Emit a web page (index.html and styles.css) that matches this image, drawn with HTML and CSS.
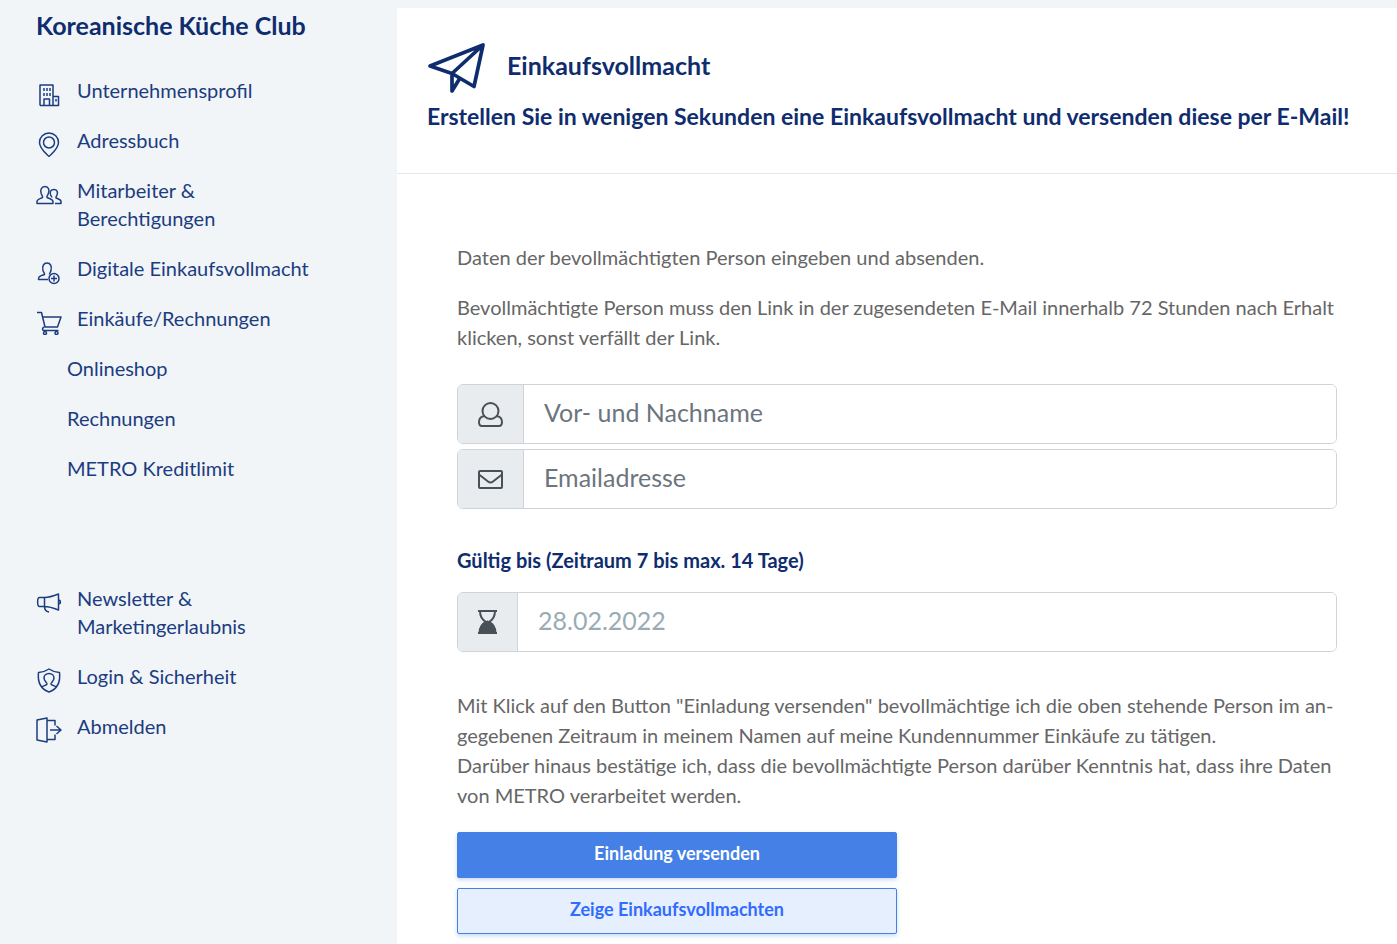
FILE: index.html
```html
<!DOCTYPE html>
<html lang="de">
<head>
    <meta charset="UTF-8">
    <meta name="viewport" content="width=device-width, initial-scale=1.0">
    <title>Einkaufsvollmacht</title>
    <link rel="stylesheet" href="styles.css">
</head>
<body>
    <aside class="sidebar">
        <h2 class="club-name">Koreanische Küche Club</h2>

        <nav class="nav">
            <a href="#" class="nav-link">
                <svg class="nav-icon" viewBox="0 0 26 26"><path d="M4 24.500V4h13v20.500M4 24.500h18.500v-9h-5.500M8 24.500v-6.500h5.500v6.500"/><path d="M8 7v3M11 7v3M14 7v3M8 12v3M11 12v3M14 12v3M20 18v2.500"/></svg>
                <span>Unternehmensprofil</span>
            </a>
            <a href="#" class="nav-link">
                <svg class="nav-icon" viewBox="0 0 26 26"><path d="M13 25.500C10 22.500 3.500 17.500 3.500 11.500a9.500 9.500 0 0 1 19 0c0 6-6.500 11-9.500 14z"/><circle cx="13" cy="11.500" r="5.500"/></svg>
                <span>Adressbuch</span>
            </a>
            <a href="#" class="nav-link">
                <svg class="nav-icon" viewBox="0 0 26 26"><path d="M1 22.500v-2c0-2 2-2.500 5.500-4 .5-1-.5-2-1.200-3.500C3.700 9 5.500 5.500 9 5.500s5 3.500 3.200 7.500c-.7 1.500-1.700 2.500-1.200 3.500 4 1.500 6 2 6 4v2z"/><path d="M14.500 13.500c-1-3 .5-5 3.500-5s4.200 2.500 3 5.500c-.6 1.500-1.300 2-1 3 3 1.300 5 1.500 5 3.500v2h-6M14.500 13.500c.2 1.500 1.500 2 1.200 3"/></svg>
                <span>Mitarbeiter &amp;<br>Berechtigungen</span>
            </a>
            <a href="#" class="nav-link">
                <svg class="nav-icon" viewBox="0 0 26 26"><path d="M12 20.500H2.500c0-3 .5-3 6-5 .5-1-1-2-1.500-4C6 7 7.500 4 11 4s5 3 4 7.500c-.4 1.800-1.800 2.800-1.500 4"/><circle cx="18" cy="19.500" r="5"/><path d="M18 16.500v6M15 19.500h6"/></svg>
                <span>Digitale Einkaufsvollmacht</span>
            </a>
            <a href="#" class="nav-link">
                <svg class="nav-icon" viewBox="0 0 26 26"><path d="M1 3.500h4.500L9 18h13M6.500 8H25l-3.500 10M8 18c-2 1-2 3.500 0 3.500h14.500"/><circle cx="9" cy="24" r="1.500"/><circle cx="20.500" cy="24" r="1.500"/></svg>
                <span>Einkäufe/Rechnungen</span>
            </a>
            <a href="#" class="nav-link nav-sub">Onlineshop</a>
            <a href="#" class="nav-link nav-sub">Rechnungen</a>
            <a href="#" class="nav-link nav-sub">METRO Kreditlimit</a>
        </nav>

        <nav class="nav nav-account">
            <a href="#" class="nav-link">
                <svg class="nav-icon" viewBox="0 0 26 26"><path d="M8.500 8.500h-5C1 8.500 1 17.500 3.500 17.500h5zM8.500 8.500c5 0 9-1.500 14-3.500v16c-5-2-9-3.500-14-3.500M22.500 11c2.500 0 2.500 4 0 4M8.500 17.500c0 3 1 5 4.500 5.500"/></svg>
                <span>Newsletter &amp;<br>Marketingerlaubnis</span>
            </a>
            <a href="#" class="nav-link">
                <svg class="nav-icon" viewBox="0 0 26 26"><path d="M13 2c3 2 7 3.500 10.500 3.500 1 9-2 16.500-10.500 19.500C4.500 22 1.500 14.500 2.500 5.500 6 5.500 10 4 13 2z"/><path d="M5.500 20c2-1.500 5-1.500 5.500-3 .3-1-3-3-3-6 0-2.500 2-4.500 5-4.500s5 2 5 4.500c0 3-3.300 5-3 6 .5 1.500 3.500 1.500 5.500 3"/></svg>
                <span>Login &amp; Sicherheit</span>
            </a>
            <a href="#" class="nav-link">
                <svg class="nav-icon" viewBox="0 0 26 26"><path d="M1 3l10-2v24l-10-2zM11 3.500h8v5M11 22.500h8v-5M14 13h11M20.500 9l4.500 4-4.500 4"/></svg>
                <span>Abmelden</span>
            </a>
        </nav>
    </aside>

    <main class="content">
        <header class="page-header">
            <div class="title-row">
                <svg class="plane" viewBox="0 0 60 54"><path d="M3 26L56 5l-9 41.500L25 33.500zM56 5L25 33.500v17.500l8-13"/></svg>
                <h1>Einkaufsvollmacht</h1>
            </div>
            <p class="subtitle">Erstellen Sie in wenigen Sekunden eine Einkaufsvollmacht und versenden diese per E-Mail!</p>
        </header>

        <form class="proxy-form">
            <p>Daten der bevollmächtigten Person eingeben und absenden.</p>
            <p>Bevollmächtigte Person muss den Link in der zugesendeten E-Mail innerhalb 72 Stunden nach Erhalt klicken, sonst verfällt der Link.</p>

            <div class="fields">
                <div class="input-group">
                    <label for="name" class="addon" aria-label="Vor- und Nachname">
                        <svg viewBox="0 0 25 26"><circle cx="12.500" cy="10" r="8"/><path d="M6.500 15c-3.500.5-5.500 3-5.500 6 0 2.500 1 4 3 4h17c2 0 3-1.500 3-4 0-3-2-5.500-5.500-6"/></svg>
                    </label>
                    <input type="text" id="name" placeholder="Vor- und Nachname">
                </div>
                <div class="input-group">
                    <label for="email" class="addon" aria-label="Emailadresse">
                        <svg viewBox="0 0 25 26"><rect x="1" y="5" width="23" height="17" rx="1"/><path d="M1 8.500l9 7q2.500 2 5 0l9-7"/></svg>
                    </label>
                    <input type="email" id="email" placeholder="Emailadresse">
                </div>
            </div>

            <label for="valid-until" class="date-label">Gültig bis (Zeitraum 7 bis max. 14 Tage)</label>
            <div class="input-group date-group">
                <label for="valid-until" class="addon" aria-label="Gültig bis">
                    <svg class="hourglass" viewBox="0 0 19 26"><path d="M2 2C2 8 4.500 11 8 13 4.500 15 2 18 2 24h15c0-6-2.500-9-6-11 3.500-2 6-5 6-11"/><path class="sand" d="M9.500 12.500C4.500 14.500 1.500 18.500 1.500 24h16c0-5.500-3-9.500-8-11.500z"/><path d="M0 2h19M0 24h19"/></svg>
                </label>
                <input type="text" id="valid-until" value="28.02.2022">
            </div>

            <p class="consent">Mit Klick auf den Button "Einladung versenden" bevollmächtige ich die oben stehende Person im an&shy;gegebenen Zeitraum in meinem Namen auf meine Kundennummer Einkäufe zu tätigen.<br>Darüber hinaus bestätige ich, dass die bevollmächtigte Person darüber Kenntnis hat, dass ihre Daten von METRO verarbeitet werden.</p>

            <div class="actions">
                <button type="submit" class="btn btn-primary">Einladung versenden</button>
                <button type="button" class="btn btn-secondary">Zeige Einkaufsvollmachten</button>
            </div>
        </form>
    </main>
</body>
</html>
```
FILE: styles.css
```css
* {
    box-sizing: border-box;
}
body {
    display: flex;
    min-height: 100vh;
    margin: 0;
    padding-top: 8px;
    background-color: #f1f5f8;
    color: #666;
    font-family: Lato, sans-serif;
    font-size: 20px;
    line-height: 30px;
}
h1, h2, p {
    margin: 0;
}

/* Sidebar */
.sidebar {
    flex: 0 0 397px;
    padding: 0 36px;
    color: #0f2d6e;
}
.club-name {
    font-size: 25px;
    line-height: 34px;
}
.nav {
    display: flex;
    flex-direction: column;
    gap: 22px;
    margin-top: 34px;
}
.nav-account {
    margin-top: 102px;
}
.nav-link {
    display: flex;
    align-items: flex-start;
    gap: 15px;
    color: #1c3c80;
    line-height: 28px;
    text-decoration: none;
}
.nav-sub {
    padding-left: 31px;
}
.nav-icon {
    flex: none;
    width: 26px;
    height: 26px;
    margin: 5px 0 -3px;
    fill: none;
    stroke: #1c3c80;
    stroke-width: 1.5;
    stroke-linejoin: round;
}

/* Content */
.content {
    flex: 1;
    min-width: 0;
    background-color: #fff;
}
.page-header {
    padding: 32px 30px 42px;
    border-bottom: 1px solid #e4e7ea;
    color: #0f2d6e;
}
.title-row {
    display: flex;
    align-items: center;
    gap: 20px;
}
.plane {
    width: 60px;
    height: 54px;
    fill: none;
    stroke: #0f2d6e;
    stroke-width: 3.700;
    stroke-linejoin: round;
}
h1 {
    padding-bottom: 4px;
    font-size: 25px;
    line-height: 36px;
}
.subtitle {
    margin-top: 7px;
    font-size: 23px;
    font-weight: bold;
}
.proxy-form {
    padding: 68px 60px 10px;
}
.proxy-form p + p {
    margin-top: 20px;
}
.fields {
    display: flex;
    flex-direction: column;
    gap: 5px;
    margin: 32px 0 36px;
}
.input-group {
    display: flex;
    height: 60px;
    border: 1px solid #ced4da;
    border-radius: 6px;
    overflow: hidden;
}
.addon {
    display: flex;
    align-items: center;
    padding: 0 20px;
    background-color: #e9ecef;
    border-right: 1px solid #ced4da;
}
.addon svg {
    width: 25px;
    height: 26px;
    fill: none;
    stroke: #495057;
    stroke-width: 2;
}
.addon .hourglass {
    width: 19px;
}
.addon .sand {
    fill: #495057;
}
.input-group input {
    flex: 1;
    min-width: 0;
    padding: 0 20px 4px;
    border: none;
    outline: none;
    background-color: #fff;
    color: #9aabb5;
    font-family: inherit;
    font-size: 25px;
}
.input-group input::placeholder {
    color: #6c757d;
    opacity: 1;
}
.date-label {
    display: block;
    color: #0f2d6e;
    font-weight: bold;
}
.date-group {
    margin-top: 17px;
}
.consent {
    padding-top: 38px;
}
.actions {
    display: flex;
    flex-direction: column;
    gap: 10px;
    width: 50%;
    margin-top: 22px;
}
.btn {
    height: 46px;
    padding-bottom: 5px;
    border: 1px solid #4580e6;
    border-radius: 2px;
    box-shadow: 0 2px 4px rgba(69, 128, 230, 0.3);
    font-family: inherit;
    font-size: 18px;
    font-weight: bold;
    cursor: pointer;
}
.btn-primary {
    background-color: #4580e6;
    color: #fff;
}
.btn-secondary {
    background-color: #e6effe;
    color: #316bff;
}
```
